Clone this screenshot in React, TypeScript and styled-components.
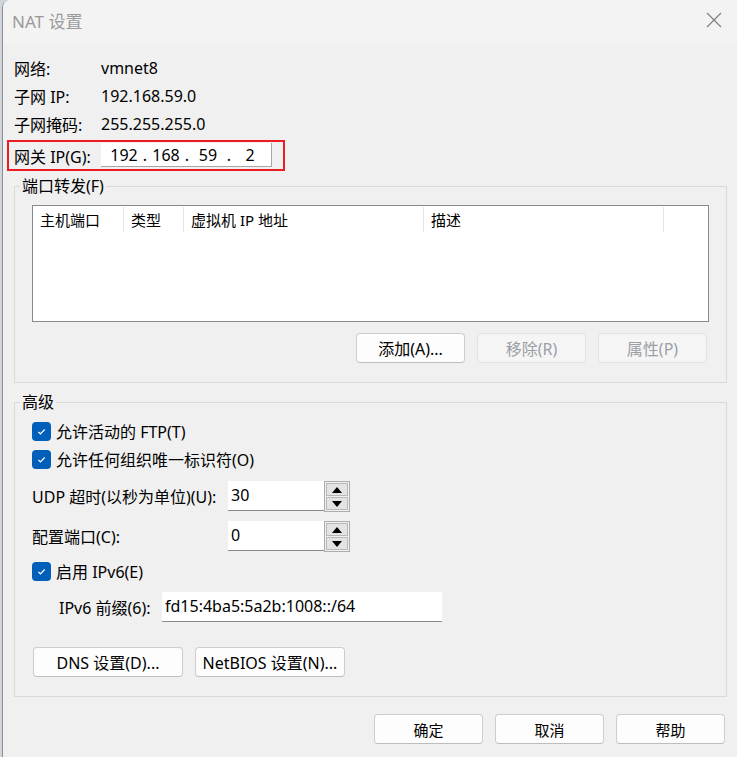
import styled, { createGlobalStyle } from "styled-components";

const GlobalStyle = createGlobalStyle`
  html, body {
    margin: 0;
    padding: 0;
    background: #cfd5dc;
  }

  * {
    box-sizing: border-box;
  }
`;

const App = () => {
  return (
    <>
      <GlobalStyle />
      <Window>
        <TitleBar>
          <Title>NAT 设置</Title>
          <CloseButton>
            <svg width="16" height="16" viewBox="0 0 16 16">
              <path d="M1 1 L15 15 M15 1 L1 15" stroke="#7c7c7c" strokeWidth="1.1" fill="none" />
            </svg>
          </CloseButton>
        </TitleBar>

        <Body>
          <InfoRow>
            <FieldLabel $width={87}>网络:</FieldLabel>
            <span>vmnet8</span>
          </InfoRow>
          <InfoRow>
            <FieldLabel $width={87}>子网 IP:</FieldLabel>
            <span>192.168.59.0</span>
          </InfoRow>
          <InfoRow>
            <FieldLabel $width={87}>子网掩码:</FieldLabel>
            <span>255.255.255.0</span>
          </InfoRow>

          <GatewayFrame>
            <FieldLabel $width={87}>网关 IP(G):</FieldLabel>
            <IpBox>
              <IpPart>192</IpPart>
              <IpDot>.</IpDot>
              <IpPart>168</IpPart>
              <IpDot>.</IpDot>
              <IpPart>59</IpPart>
              <IpDot>.</IpDot>
              <IpPart>2</IpPart>
            </IpBox>
          </GatewayFrame>

          <Group $top={5}>
            <GroupLegend>端口转发(F)</GroupLegend>
            <PortInner>
              <PortList>
                <ListHeader>
                  <HeaderCell $width={91}>主机端口</HeaderCell>
                  <HeaderCell $width={60}>类型</HeaderCell>
                  <HeaderCell $width={240}>虚拟机 IP 地址</HeaderCell>
                  <HeaderCell $width={240}>描述</HeaderCell>
                </ListHeader>
              </PortList>
              <ButtonRow>
                <Button $width={109}>添加(A)...</Button>
                <Button $width={109} disabled>
                  移除(R)
                </Button>
                <Button $width={109} disabled>
                  属性(P)
                </Button>
              </ButtonRow>
            </PortInner>
          </Group>

          <Group $top={9}>
            <GroupLegend>高级</GroupLegend>
            <AdvancedInner>
              <CheckRow $top={5}>
                <CheckBox />
                <span>允许活动的 FTP(T)</span>
              </CheckRow>
              <CheckRow $top={0}>
                <CheckBox />
                <span>允许任何组织唯一标识符(O)</span>
              </CheckRow>

              <FormRow $top={8}>
                <FieldLabel $width={196}>UDP 超时(以秒为单位)(U):</FieldLabel>
                <TextBox $width={96}>30</TextBox>
                <Spinner />
              </FormRow>
              <FormRow $top={10}>
                <FieldLabel $width={196}>配置端口(C):</FieldLabel>
                <TextBox $width={96}>0</TextBox>
                <Spinner />
              </FormRow>

              <CheckRow $top={6}>
                <CheckBox />
                <span>启用 IPv6(E)</span>
              </CheckRow>

              <FormRow $top={7} $indent={27}>
                <FieldLabel $width={103}>IPv6 前缀(6):</FieldLabel>
                <TextBox $width={280}>fd15:4ba5:5a2b:1008::/64</TextBox>
              </FormRow>

              <DnsRow>
                <Button $width={150}>DNS 设置(D)...</Button>
                <Button $width={150}>NetBIOS 设置(N)...</Button>
              </DnsRow>
            </AdvancedInner>
          </Group>

          <Footer>
            <Button $width={109} $cjk>确定</Button>
            <Button $width={109} $cjk>取消</Button>
            <Button $width={109} $cjk>帮助</Button>
          </Footer>
        </Body>
      </Window>
    </>
  );
};

const CheckBox = () => (
  <CheckBoxBox>
    <svg width="19" height="19" viewBox="0 0 19 19">
      <path d="M6.3 9.9 L8.4 11.8 L12.7 7.5" stroke="#ffffff" strokeWidth="1.2" fill="none" />
    </svg>
  </CheckBoxBox>
);

const Spinner = () => (
  <Spin>
    <SpinButton>
      <svg width="10" height="6" viewBox="0 0 10 6">
        <path d="M0 6 L5 0 L10 6 Z" fill="#000" />
      </svg>
    </SpinButton>
    <SpinButton>
      <svg width="10" height="6" viewBox="0 0 10 6">
        <path d="M0 0 L10 0 L5 6 Z" fill="#000" />
      </svg>
    </SpinButton>
  </Spin>
);

export default App;

const Window = styled.div`
  margin-left: 2px;
  width: 735px;
  height: 757px;
  border-left: 1px solid #8d8d8d;
  border-top-left-radius: 8px;
  background: #f0f0f0;
  display: flex;
  flex-direction: column;
  overflow: hidden;
  font-family: "Noto Sans", "Noto Sans CJK SC", sans-serif;
  font-size: 16px;
  color: #000;
`;

const TitleBar = styled.div`
  height: 43px;
  flex-shrink: 0;
  background: #f3f3f3;
  display: flex;
  align-items: center;
  justify-content: space-between;
  padding: 0 15px 3px 9px;
`;

const Title = styled.div`
  font-size: 17px;
  color: #9a9a9a;
`;

const CloseButton = styled.div`
  width: 16px;
  height: 16px;
  display: flex;
`;

const Body = styled.div`
  flex: 1;
  display: flex;
  flex-direction: column;
  padding: 11px 10px 0 11px;
`;

const InfoRow = styled.div`
  height: 28px;
  display: flex;
  align-items: center;
  white-space: nowrap;
`;

const FieldLabel = styled.span<{ $width: number }>`
  width: ${(p) => p.$width}px;
  flex-shrink: 0;
  white-space: nowrap;
`;

const GatewayFrame = styled.div`
  align-self: flex-start;
  margin: 2px 0 0 -7px;
  height: 31px;
  border: 2px solid #ea1c24;
  padding: 0 11px 0 5px;
  display: flex;
  align-items: center;
`;

const IpBox = styled.div`
  width: 171px;
  height: 24px;
  margin-top: -1px;
  background: #fff;
  border-right: 1px solid #a6a6a6;
  border-bottom: 1px solid #a6a6a6;
  display: flex;
  align-items: center;
  padding-left: 5px;
`;

const IpPart = styled.span`
  width: 36px;
  text-align: center;
`;

const IpDot = styled.span`
  width: 6px;
  text-align: center;
`;

const Group = styled.fieldset<{ $top: number }>`
  margin: ${(p) => p.$top}px 0 0 0;
  padding: 0;
  min-width: 0;
  border: 1px solid #dadada;
`;

const GroupLegend = styled.legend`
  margin-left: 5px;
  padding: 0 2px;
  height: 20px;
  line-height: 20px;
`;

const PortInner = styled.div`
  padding: 9px 17px 19px 17px;
  display: flex;
  flex-direction: column;
`;

const PortList = styled.div`
  height: 117px;
  background: #fff;
  border: 1px solid #868a91;
`;

const ListHeader = styled.div`
  display: flex;
  height: 26px;
  padding-top: 1px;
`;

const HeaderCell = styled.div<{ $width: number }>`
  width: ${(p) => p.$width}px;
  height: 25px;
  border-right: 1px solid #e5e5e5;
  padding-left: 7px;
  font-size: 15px;
  display: flex;
  align-items: center;
  white-space: nowrap;
`;

const ButtonRow = styled.div`
  margin-top: 11px;
  padding-right: 2px;
  display: flex;
  justify-content: flex-end;
  gap: 12px;
`;

const Button = styled.button<{ $width: number; $cjk?: boolean }>`
  width: ${(p) => p.$width}px;
  height: 30px;
  padding: 0;
  font-family: inherit;
  font-size: ${(p) => (p.$cjk ? 15 : 16)}px;
  color: #000;
  background: #fdfdfd;
  border: 1px solid #cdcdcd;
  border-bottom-color: #bdbdbd;
  border-radius: 4px;
  white-space: nowrap;

  &:disabled {
    color: #9aa0a6;
    background: #f5f5f5;
    border-color: #e4e4e4;
  }
`;

const AdvancedInner = styled.div`
  padding: 0 17px 19px 17px;
  display: flex;
  flex-direction: column;
`;

const CheckRow = styled.div<{ $top: number }>`
  margin-top: ${(p) => p.$top}px;
  height: 28px;
  display: flex;
  align-items: center;
  gap: 5px;
  white-space: nowrap;
`;

const CheckBoxBox = styled.span`
  width: 19px;
  height: 19px;
  border-radius: 4px;
  background: #005fb8;
  display: flex;
`;

const FormRow = styled.div<{ $top: number; $indent?: number }>`
  margin-top: ${(p) => p.$top}px;
  padding-left: ${(p) => p.$indent ?? 0}px;
  height: 30px;
  display: flex;
  align-items: center;
`;

const TextBox = styled.div<{ $width: number }>`
  width: ${(p) => p.$width}px;
  height: 30px;
  background: #fff;
  border-bottom: 1px solid #8a8a8a;
  padding: 1px 0 0 3px;
  line-height: 26px;
`;

const Spin = styled.div`
  width: 26px;
  height: 31px;
  margin-top: 1px;
  border: 1px solid #adadad;
  background: #f0f0f0;
  display: flex;
  flex-direction: column;
  gap: 1px;
  padding: 1px;
`;

const SpinButton = styled.div`
  flex: 1;
  background: #e3e3e3;
  border: 1px solid #b9b9b9;
  display: flex;
  align-items: center;
  justify-content: center;
`;

const DnsRow = styled.div`
  margin-top: 25px;
  padding-left: 1px;
  display: flex;
  gap: 12px;
`;

const Footer = styled.div`
  margin-top: 17px;
  padding-right: 2px;
  display: flex;
  justify-content: flex-end;
  gap: 12px;
`;
